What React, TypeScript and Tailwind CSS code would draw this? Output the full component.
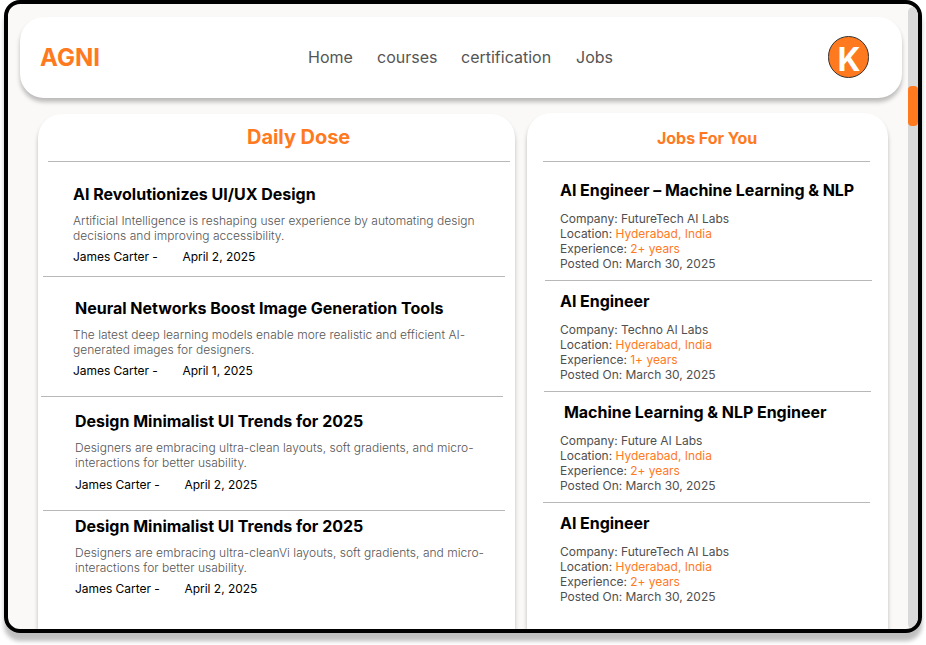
const articles = [
  {
    title: "AI Revolutionizes UI/UX Design",
    lines: ["Artificial Intelligence is reshaping user experience by automating design", "decisions and improving accessibility."],
    date: "April 2, 2025",
    box: "h-[114px] pt-[22px]",
    titleX: "ml-[35px]",
    bodyX: "ml-[35px]",
    gap: "mt-[9px]",
    metaGap: "mt-[6px]",
    rule: "ml-[5px]",
  },
  {
    title: "Neural Networks Boost Image Generation Tools",
    lines: ["The latest deep learning models enable more realistic and efficient AI-", "generated images for designers."],
    date: "April 1, 2025",
    box: "h-[119px] pt-[21px]",
    titleX: "ml-[37px]",
    bodyX: "ml-[35px]",
    gap: "mt-[9px]",
    metaGap: "mt-[6px]",
    rule: "ml-[3px]",
  },
  {
    title: "Design Minimalist UI Trends for 2025",
    lines: ["Designers are embracing ultra-clean layouts, soft gradients, and micro-", "interactions for better usability."],
    date: "April 2, 2025",
    box: "h-[113px] pt-[14px]",
    titleX: "ml-[37px]",
    bodyX: "ml-[37px]",
    gap: "mt-[9px]",
    metaGap: "mt-[7px]",
    rule: "ml-[5px]",
  },
  {
    title: "Design Minimalist UI Trends for 2025",
    lines: ["Designers are embracing ultra-cleanVi layouts, soft gradients, and micro-", "interactions for better usability."],
    date: "April 2, 2025",
    box: "h-[118px] pt-[5px]",
    titleX: "ml-[37px]",
    bodyX: "ml-[37px]",
    gap: "mt-[9px]",
    metaGap: "mt-[6px]",
    rule: "",
  },
];

const jobs = [
  { title: "AI Engineer – Machine Learning & NLP", company: "FutureTech AI Labs", years: "2+ years", box: "h-[118px] pt-[18px]", titleX: "ml-[33px]", rule: "ml-[18px]" },
  { title: "AI Engineer", company: "Techno AI Labs", years: "1+ years", box: "h-[110px] pt-[10px]", titleX: "ml-[33px]", rule: "ml-[17px]" },
  { title: "Machine Learning & NLP Engineer", company: "Future AI Labs", years: "2+ years", box: "h-[110px] pt-[10px]", titleX: "ml-[37px]", rule: "ml-[16px]" },
  { title: "AI Engineer", company: "FutureTech AI Labs", years: "2+ years", box: "h-[126px] pt-[10px]", titleX: "ml-[33px]", rule: "" },
];

const panel = "rounded-t-[24px] bg-white shadow-[0_4px_4px_rgba(0,0,0,0.25)]";

export default function App() {
  return (
    <div className="h-[645px] w-[926px] overflow-hidden bg-white pl-1 font-['Inter',sans-serif] whitespace-nowrap">
      <div className="h-[633px] w-[918px] rounded-[16px] shadow-[0_8px_4px_rgba(0,0,0,0.25)]">
        <div className="flex h-full w-full overflow-hidden rounded-[16px] border-4 border-black bg-[#faf9f7]">
          <div className="w-[900px] shrink-0 pl-3 pt-[13px]">
            <header className="flex h-[81px] w-[882px] items-center rounded-[24px] bg-white pl-[20px] shadow-[0_4px_4px_rgba(0,0,0,0.25)]">
              <div className="w-[268px] text-[24px] font-bold leading-[30px] text-[#ff7a1f]">AGNI</div>
              <nav className="mb-[2px] flex h-6 text-[16px] leading-6 text-[#555]">
                <a className="w-[69px]">Home</a>
                <a className="w-[84px]">courses</a>
                <a className="w-[115px]">certification</a>
                <a className="w-[252px]">Jobs</a>
              </nav>
              <div className="mb-[1px] flex h-[42px] w-[41px] items-center justify-center rounded-full border border-[#333] bg-[#ff7a1f] pl-px pt-[6px] text-[32px] font-bold leading-none text-white">K</div>
            </header>
            <div className="flex items-start pl-[18px]">
              <section className={`mt-4 h-[520px] w-[477px] ${panel}`}>
                <h2 className="h-[47px] pl-[209px] pt-[8px] text-[20px] font-bold leading-[30px] tracking-[-0.05px] text-[#ff7a1f]">Daily Dose</h2>
                <hr className="ml-[10px] w-[462px] border-[#b8b8b8]" />
                {articles.map((a, i) => (
                  <article key={i}>
                    <div className={a.box}>
                      <h3 className={`${a.titleX} text-[16px] font-bold leading-5 tracking-[-0.005px] text-black`}>{a.title}</h3>
                      <div className={`${a.bodyX} ${a.gap}`}>
                        <p className="text-[12px] font-light leading-[15px] tracking-[0.025px] text-[#555]">{a.lines[0]}<br />{a.lines[1]}</p>
                        <p className={`${a.metaGap} flex text-[12px] leading-4 tracking-[-0.03px] text-black`}>
                          <span className="w-[109.5px]">James Carter -</span>
                          <span>{a.date}</span>
                        </p>
                      </div>
                    </div>
                    {a.rule && <hr className={`${a.rule} w-[462px] border-[#b8b8b8]`} />}
                  </article>
                ))}
              </section>
              <section className={`ml-3 mt-[15px] h-[520px] w-[361px] ${panel}`}>
                <h2 className="h-[48px] pl-[130px] pt-[10px] text-[16px] font-bold leading-[30px] tracking-[-0.04px] text-[#ff7a1f]">Jobs For You</h2>
                <hr className="ml-[16px] w-[327px] border-[#b8b8b8]" />
                {jobs.map((j, i) => (
                  <article key={i}>
                    <div className={j.box}>
                      <h3 className={`${j.titleX} text-[16px] font-bold leading-5 tracking-[-0.04px] text-black`}>{j.title}</h3>
                      <div className="ml-[33px] mt-[11px] text-[12px] leading-[15px] tracking-[-0.02px] text-[#4f4f4f]">
                        <p>Company: {j.company}</p>
                        <p>Location: <span className="text-[#ff7a1f]">Hyderabad, India</span></p>
                        <p>Experience: <span className="text-[#ff7a1f]">{j.years}</span></p>
                        <p>Posted On: March 30, 2025</p>
                      </div>
                    </div>
                    {j.rule && <hr className={`${j.rule} w-[327px] border-[#b8b8b8]`} />}
                  </article>
                ))}
              </section>
            </div>
          </div>
          <div className="mt-[3px] h-[622px] w-[10px] rounded-[5px] bg-[#d9d9d9] pt-[79px]">
            <div className="h-[40px] w-[10px] rounded-[4px] bg-[#ff7a1f]" />
          </div>
        </div>
      </div>
    </div>
  );
}
